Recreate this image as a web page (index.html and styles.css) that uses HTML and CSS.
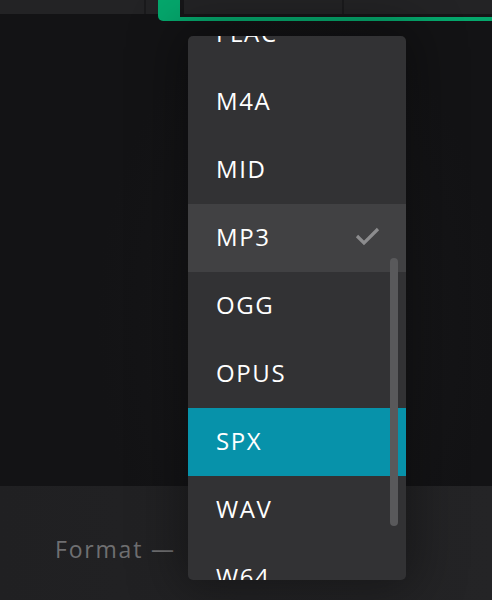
FILE: index.html
```html
<!DOCTYPE html>
<html>
<head>
<meta charset="utf-8">
<link rel="stylesheet" href="styles.css">
</head>
<body>
<div class="page">
  <div class="topbar">
    <div class="top-left">
      <div class="cell c1"></div>
      <div class="sep"></div>
      <div class="cell c2"></div>
    </div>
    <div class="green-frame">
      <div class="inner">
        <div class="cell c3"></div>
        <div class="sep"></div>
        <div class="cell c4"></div>
      </div>
    </div>
  </div>
  <div class="stage"></div>
  <div class="bottom">
    <span class="label">Format —</span>
  </div>

  <div class="menu">
    <div class="list">
      <div class="item">FLAC</div>
      <div class="item">M4A</div>
      <div class="item">MID</div>
      <div class="item selected">MP3
        <svg class="check" width="26" height="20" viewBox="0 0 26 20"><polyline points="2,9 9,16 23,2" fill="none" stroke="#8c8c8e" stroke-width="3.2"/></svg>
      </div>
      <div class="item">OGG</div>
      <div class="item">OPUS</div>
      <div class="item hover">SPX</div>
      <div class="item">WAV</div>
      <div class="item">W64</div>
    </div>
    <div class="scrollbar"></div>
  </div>
</div>
</body>
</html>
```

FILE: styles.css
```css
html, body {
  margin: 0;
  padding: 0;
  background: #131315;
}
.page {
  position: relative;
  width: 492px;
  height: 600px;
  overflow: hidden;
  display: flex;
  flex-direction: column;
  font-family: "Open Sans", "DejaVu Sans", sans-serif;
}
.topbar {
  display: flex;
  height: 21px;
  flex: none;
}
.top-left {
  width: 158px;
  height: 14px;
  display: flex;
}
.cell {
  height: 14px;
  background: #232325;
}
.c1 { width: 144px; }
.c2 { flex: 1; }
.sep {
  width: 2px;
  height: 14px;
  background: #1a1a1c;
}
.green-frame {
  flex: 1;
  background: #05a76c;
  padding: 0 0 4px 22px;
  border-bottom-left-radius: 5px;
}
.inner {
  height: 17px;
  background: #161618;
  display: flex;
  padding-left: 4px;
  align-items: flex-start;
}
.c3 { width: 158px; }
.c4 { flex: 1; }
.stage {
  flex: 1;
  background: radial-gradient(ellipse 200px 320px at 297px 300px, #18181a 0%, #131315 100%);
}
.bottom {
  flex: none;
  height: 114px;
  background: linear-gradient(90deg, #202022, #242426);
  display: flex;
  align-items: flex-start;
  padding-left: 55px;
  box-sizing: border-box;
}
.label {
  margin-top: 47px;
  font-size: 23px;
  color: #6f6f71;
  letter-spacing: 1.8px;
}
.menu {
  position: absolute;
  left: 188px;
  top: 36px;
  width: 218px;
  height: 544px;
  background: #323234;
  border-radius: 5px;
  overflow: hidden;
  box-shadow: 0 0 50px 10px rgba(0, 0, 0, 0.35);
}
.list {
  margin-top: -36px;
}
.item {
  height: 68px;
  box-sizing: border-box;
  display: flex;
  align-items: center;
  justify-content: space-between;
  padding: 0 25px 3px 28px;
  font-size: 24px;
  color: #ffffff;
  letter-spacing: 1.6px;
}
.selected {
  background: #414143;
}
.hover {
  background: #0792aa;
}
.check {
  margin-top: 0;
}
.scrollbar {
  position: absolute;
  left: 202px;
  top: 222px;
  width: 8px;
  height: 268px;
  border-radius: 4px;
  background: #59595b;
}
```
